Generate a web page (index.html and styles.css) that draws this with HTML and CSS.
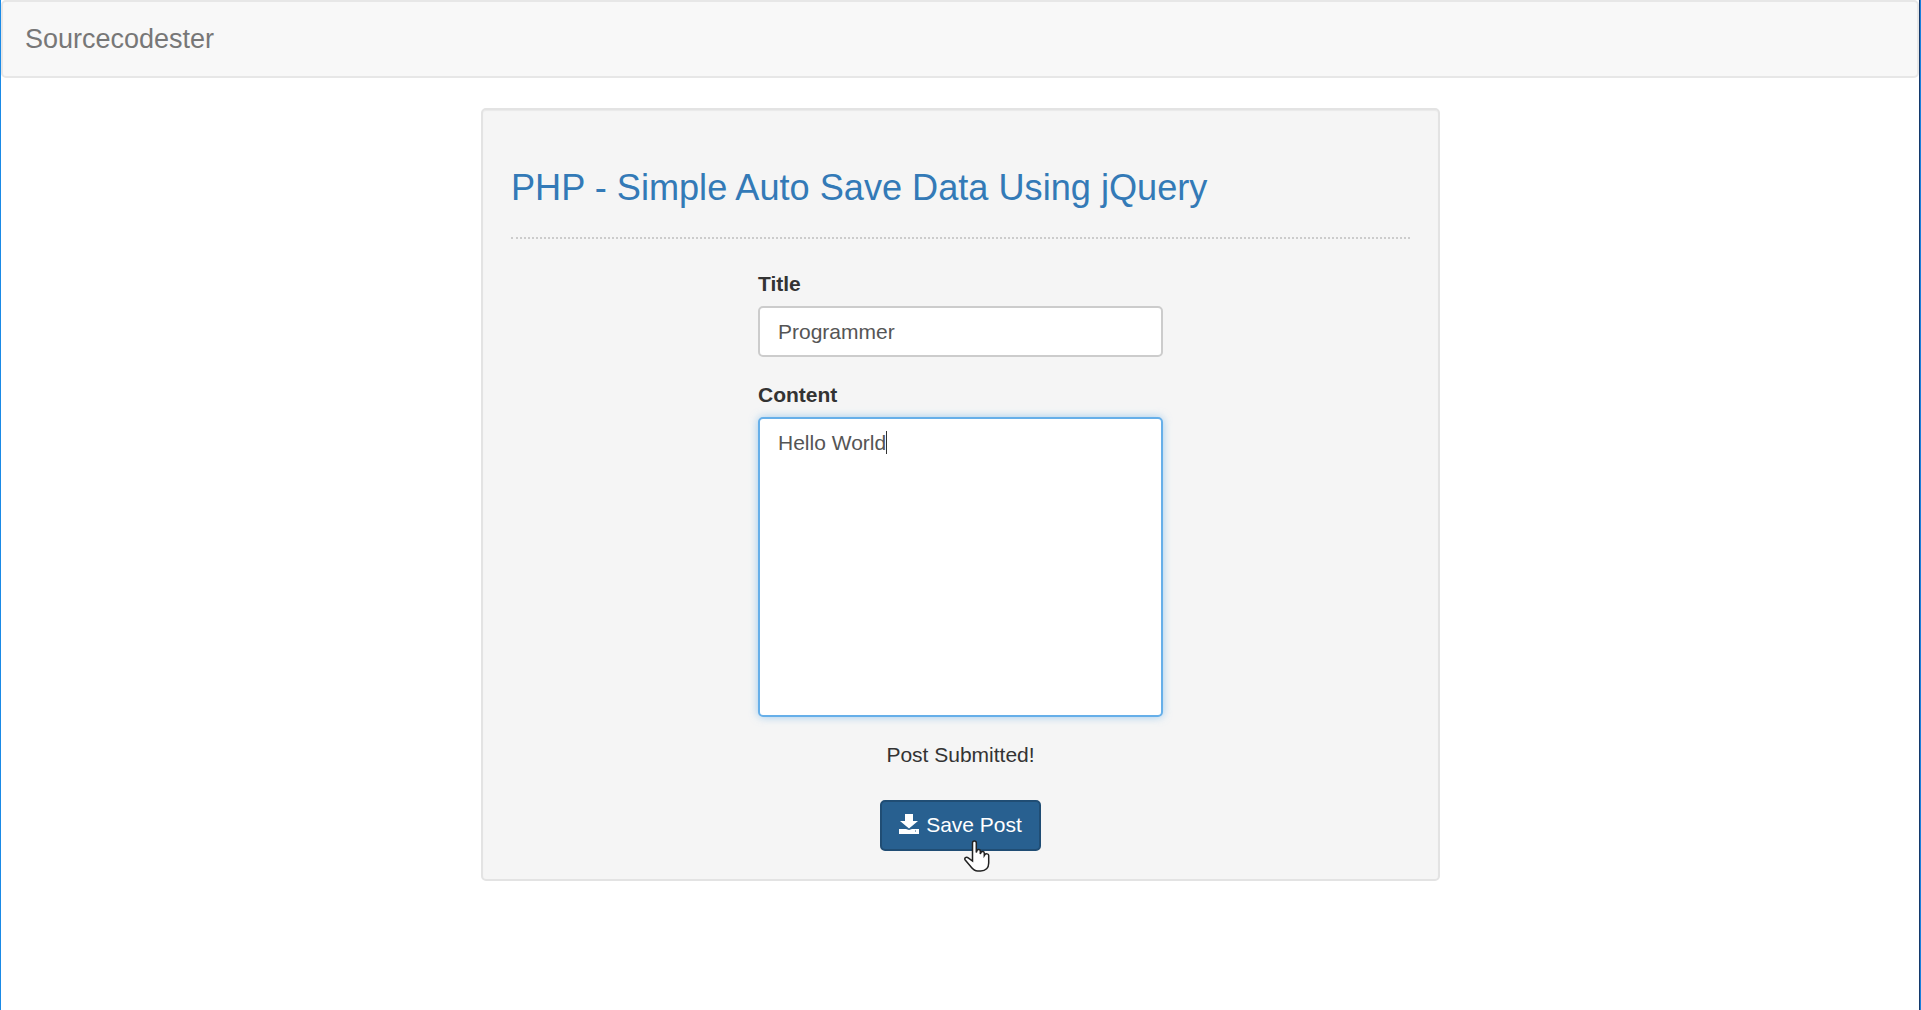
FILE: index.html
```html
<!DOCTYPE html>
<html lang="en">
<head>
<meta charset="utf-8">
<title>PHP - Simple Auto Save Data Using jQuery</title>
<link rel="stylesheet" href="styles.css">
</head>
<body>
<div class="frame">
  <nav class="navbar"><a class="brand" href="#">Sourcecodester</a></nav>
  <main class="well">
    <h3 class="heading">PHP - Simple Auto Save Data Using jQuery</h3>
    <hr class="rule">
    <form class="post-form">
      <div class="group">
        <label class="field-label">Title</label>
        <div class="control input-box">Programmer</div>
      </div>
      <div class="group">
        <label class="field-label">Content</label>
        <div class="control textarea-box"><span class="typed">Hello World</span></div>
      </div>
      <p class="status">Post Submitted!</p>
      <div class="actions">
        <button class="save-btn" type="button">
          <svg class="save-icon" viewBox="0 0 20 20" aria-hidden="true"><path d="M6 0h8v7h5l-9 7.500L1 7h5z"/><path fill-rule="evenodd" d="M0 15h7l3 1 3-1h7v5H0zM16 16.500v1h1v-1z"/></svg>
          <span>Save Post</span>
        </button>
        <svg class="hand" viewBox="0 0 26 32" aria-hidden="true"><path d="M8.500 3c0-2.600 3.800-2.600 3.800 0v9.500l.7-2c.7-1.500 3.300-1.200 3.300.6V14l.7-1.600c.8-1.400 3.300-1 3.300.8v2.300l.6-1c.9-1.300 3.800-.7 3.800 1V23c0 4.800-3 8-8 8h-3c-3.500 0-5-2-7-4.500L1.200 20c-1.200-1.700 1-3.700 3-2.200L8.500 21z"/></svg>
      </div>
    </form>
  </main>
</div>
</body>
</html>
```

FILE: styles.css
```css
* { box-sizing: border-box; }
html, body { margin: 0; height: 100%; background: #fff; }
body {
  font-family: "Liberation Sans", Arial, sans-serif;
  font-size: 21px;
  line-height: 30px;
  color: #333;
  border-right: 1px solid #1a7fdc;
}
.frame {
  height: 1010px;
  border-left: 1px solid #1a8ae6;
  border-right: 1px solid #14396b;
  overflow: hidden;
}
.navbar {
  height: 78px;
  margin-bottom: 30px;
  padding-left: 22px;
  display: flex;
  align-items: center;
  background: #f8f8f8;
  border: 2px solid #e7e7e7;
  border-radius: 5px;
}
.brand {
  font-size: 27px;
  line-height: 1;
  color: #777;
  text-decoration: none;
}
.well {
  width: 959px;
  height: 773px;
  margin-left: 480px;
  padding: 28px 28px 0;
  background: #f5f5f5;
  border: 2px solid #e3e3e3;
  border-radius: 5px;
  box-shadow: inset 0 1px 1px rgba(0, 0, 0, .05);
}
.heading {
  margin: 30px 0 0;
  font-size: 36.15px;
  font-weight: 400;
  line-height: 40px;
  color: #337ab7;
}
.rule {
  margin: 29px 0 0;
  border: 0;
  border-top: 2px dotted #ccc;
}
.post-form {
  width: 405px;
  margin: 0 auto;
  padding-top: 30px;
}
.group { margin-bottom: 23px; }
.field-label {
  display: block;
  margin-bottom: 7px;
  font-weight: 700;
}
.control {
  padding: 9px 18px 7px;
  background: #fff;
  border: 2px solid #ccc;
  border-radius: 5px;
  color: #555;
}
.input-box { height: 51px; }
.textarea-box {
  height: 300px;
  border-color: #66afe9;
  box-shadow: 0 0 8px rgba(102, 175, 233, .6);
}
.typed { border-right: 1px solid #333; }
.status {
  margin: 0;
  text-align: center;
}
.actions {
  position: relative;
  display: flex;
  justify-content: center;
  margin-top: 30px;
}
.save-btn {
  display: flex;
  align-items: center;
  justify-content: center;
  gap: 7px;
  width: 161px;
  height: 51px;
  padding: 0 0 2px;
  font: inherit;
  color: #fff;
  background: #286090;
  border: 2px solid #204d74;
  border-radius: 5px;
}
.save-icon { width: 20px; height: 20px; fill: #fff; flex: none; margin-bottom: 2px; }
.hand {
  position: absolute;
  left: 206px;
  top: 40px;
  width: 26px;
  height: 32px;
  fill: #fff;
  stroke: #222;
  stroke-width: 1.500;
}
```
